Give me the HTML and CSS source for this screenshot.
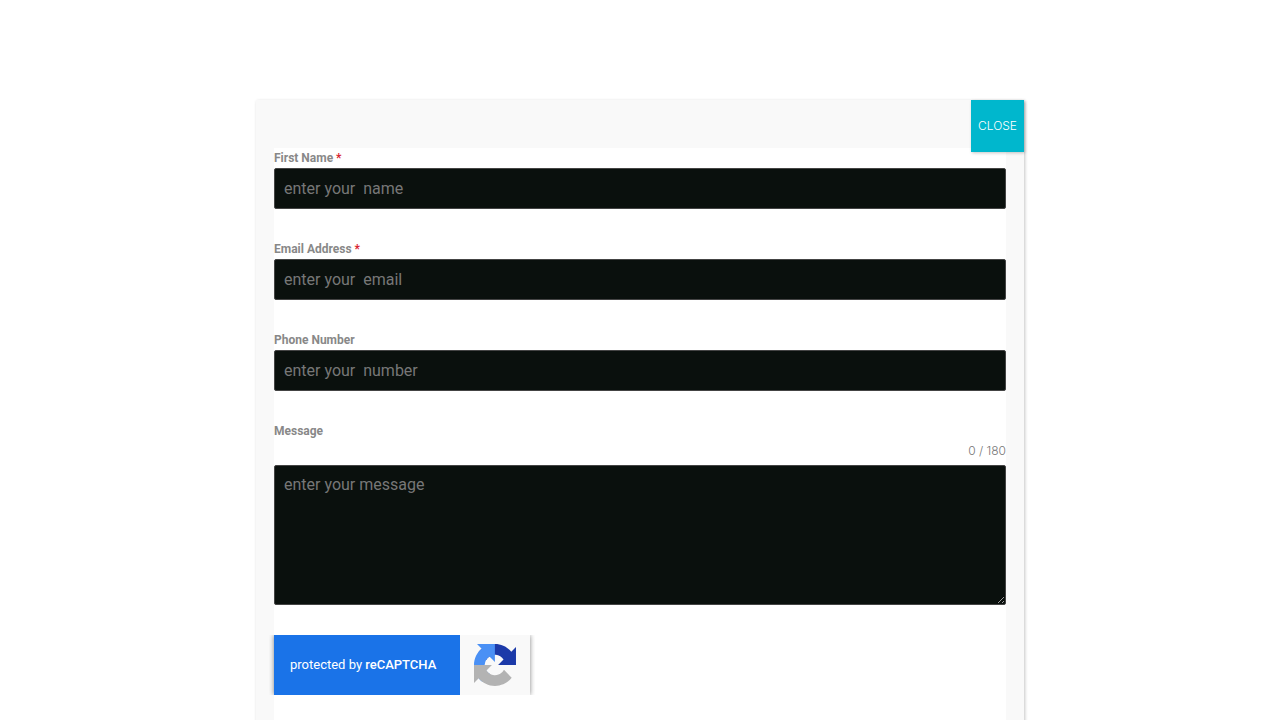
FILE: index.html
```html
<!DOCTYPE html>
<html lang="en">
<head>
<meta charset="utf-8">
<meta name="viewport" content="width=device-width, initial-scale=1">
<title>Contact form</title>
<link rel="stylesheet" href="styles.css">
</head>
<body>
<main class="popup" role="dialog" aria-label="Contact form">
  <button class="popup-close" type="button">CLOSE</button>
  <form class="form">
    <div class="field">
      <label class="label" for="name">First Name <span class="required">*</span></label>
      <input class="input" id="name" type="text" placeholder="enter your  name" required>
    </div>
    <div class="field">
      <label class="label" for="email">Email Address <span class="required">*</span></label>
      <input class="input" id="email" type="email" placeholder="enter your  email" required>
    </div>
    <div class="field">
      <label class="label" for="phone">Phone Number</label>
      <input class="input" id="phone" type="tel" placeholder="enter your  number">
    </div>
    <div class="field">
      <label class="label" for="message">Message</label>
      <span class="counter">0 / 180</span>
      <textarea class="input textarea" id="message" maxlength="180" placeholder="enter your message"></textarea>
    </div>
    <div class="captcha">
      <div class="captcha-text">protected by <strong class="captcha-brand">reCAPTCHA</strong></div>
      <div class="captcha-logo">
        <svg width="42" height="42" viewBox="0 0 64 64" aria-hidden="true">
          <path fill="#1c3aa9" d="M64 31.955l-.033-1.37V4.687l-7.16 7.16C50.948 4.674 42.033.093 32.05.093c-10.4 0-19.622 4.96-25.458 12.64l11.736 11.86a15.55 15.55 0 0 1 4.754-5.334c2.05-1.6 4.952-2.906 8.968-2.906.485 0 .86.057 1.135.163 4.976.393 9.288 3.14 11.828 7.124l-8.307 8.307L64 31.953z"/>
          <path fill="#4a90f5" d="M31.862.094l-1.37.033H4.594l7.16 7.16C4.58 13.147 0 22.06 0 32.046c0 10.4 4.96 19.622 12.64 25.458L24.5 45.768a15.55 15.55 0 0 1-5.334-4.754c-1.6-2.05-2.906-4.952-2.906-8.968 0-.485.057-.86.163-1.135.393-4.976 3.14-9.288 7.124-11.828l8.307 8.307L31.86.095z"/>
          <path fill="#b3b3b3" d="M.001 32.045l.033 1.37v25.898l7.16-7.16c5.86 7.173 14.774 11.754 24.76 11.754 10.4 0 19.622-4.96 25.458-12.64l-11.736-11.86a15.55 15.55 0 0 1-4.754 5.334c-2.05 1.6-4.952 2.906-8.968 2.906-.485 0-.86-.057-1.135-.163-4.976-.393-9.288-3.14-11.828-7.124l8.307-8.307c-10.522.04-22.4.066-27.295-.005z"/>
        </svg>
      </div>
    </div>
  </form>
</main>
</body>
</html>
```
FILE: styles.css
```css
* {
  box-sizing: border-box;
}

body {
  margin: 0;
  background: #fff;
  font-family: Roboto, sans-serif;
}

.popup {
  position: relative;
  width: 60%;
  min-height: calc(100vh - 100px);
  margin: 100px auto 0;
  padding: 48px 18px 18px;
  background: #f9f9f9;
  box-shadow: 1px 1px 3px rgba(2, 2, 2, 0.23);
}

.popup-close {
  position: absolute;
  top: 0;
  right: 0;
  width: 53px;
  height: 52px;
  padding: 8px 0;
  border: 0;
  background: #00b7cd;
  color: #fff;
  font: 300 12px/36px Inter, sans-serif;
  text-align: center;
  white-space: nowrap;
  box-shadow: 1px 1px 3px rgba(2, 2, 2, 0.23);
  cursor: pointer;
}

.form {
  display: flex;
  flex-direction: column;
  gap: 30px;
  padding-bottom: 40px;
  background: #fff;
}

.field {
  display: flex;
  flex-direction: column;
}

.label {
  color: #888;
  font-size: 12px;
  font-weight: 700;
  line-height: 20px;
}

.required {
  color: #d8232f;
}

.counter {
  align-self: flex-end;
  padding-bottom: 4px;
  color: #777;
  font: 300 12px/20px Inter, sans-serif;
}

.input {
  width: 100%;
  height: 41px;
  margin: 0;
  padding: 8px 9px;
  border: 1px solid #444;
  border-radius: 2px;
  background: #0a100d;
  color: #fff;
  font: 400 16px/21px Roboto, sans-serif;
}

.input::placeholder {
  color: #777;
  opacity: 1;
}

.textarea {
  display: block;
  height: 140px;
  resize: vertical;
}

.captcha {
  display: flex;
  width: 256px;
  height: 60px;
  background: #f9f9f9;
  box-shadow: 0 0 5px gray;
  clip-path: inset(0 -5px);
}

.captcha-text {
  width: 186px;
  padding: 0 16px;
  background: #1a73e8;
  color: #fff;
  font-size: 13px;
  line-height: 60px;
  white-space: nowrap;
}

.captcha-brand {
  font-weight: 500;
}

.captcha-logo {
  display: flex;
  flex: 1;
  align-items: center;
  justify-content: center;
}
```
